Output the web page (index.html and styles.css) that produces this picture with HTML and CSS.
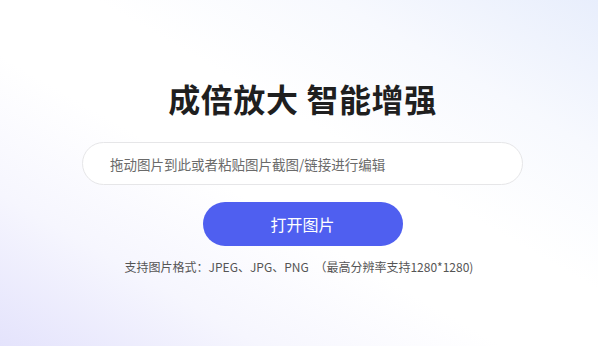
FILE: index.html
```html
<!DOCTYPE html>
<html lang="zh">
<head>
<meta charset="utf-8">
<link rel="stylesheet" href="styles.css">
</head>
<body>
<main class="page">
  <h1 class="title">成倍放大 智能增强</h1>
  <div class="drop">拖动图片到此或者粘贴图片截图/链接进行编辑</div>
  <button class="open">打开图片</button>
  <p class="hint">支持图片格式：JPEG、JPG、PNG <span class="note">（最高分辨率支持1280*1280)</span></p>
</main>
</body>
</html>
```
FILE: styles.css
```css
html, body {
  margin: 0;
  padding: 0;
  height: 100%;
}
body {
  font-family: "Noto Sans CJK SC", "Noto Sans", sans-serif;
  background: linear-gradient(to top right, #e4e3fc 0%, #f6f6fe 22%, #ffffff 42%, #ffffff 58%, #f7f9fe 78%, #e8eefc 100%);
}
.page {
  height: 346px;
  display: flex;
  flex-direction: column;
  align-items: center;
  box-sizing: border-box;
  padding-top: 76px;
  padding-left: 7px;
}
.title {
  margin: 0;
  font-size: 32px;
  line-height: 44px;
  font-weight: 700;
  color: #1f1f1f;
  letter-spacing: 0.6px;
}
.drop {
  margin-top: 22px;
  width: 441px;
  height: 43px;
  box-sizing: border-box;
  border: 1px solid #e6e6e8;
  border-radius: 22px;
  background: #ffffff;
  padding-left: 27px;
  display: flex;
  align-items: center;
  font-size: 13.5px;
  color: #6a6a6a;
}
.open {
  margin-top: 17px;
  width: 200px;
  height: 44px;
  border: none;
  border-radius: 22px;
  background: #4f5ff0;
  color: #fff;
  font-family: inherit;
  font-size: 16px;
  padding: 0;
}
.hint {
  margin: 12px 0 0;
  padding-right: 7px;
  font-size: 12px;
  line-height: 18px;
  color: #555;
}
.note {
  margin-left: 3px;
}
```
